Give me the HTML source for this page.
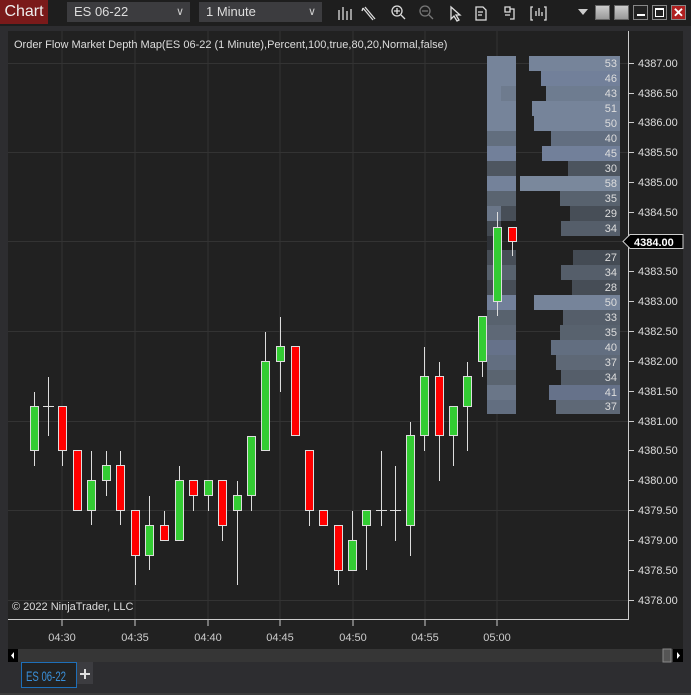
<!DOCTYPE html>
<html><head><meta charset="utf-8"><style>
*{margin:0;padding:0;box-sizing:border-box}
body{width:691px;height:695px;background:#2d2d30;font-family:"Liberation Sans",sans-serif;overflow:hidden;position:relative}
.top{position:absolute;left:0;top:0;width:691px;height:26px;background:#1e1e1e}
.chartlbl{position:absolute;left:0;top:0;width:48px;height:24px;background:#7a1a1a;color:#eee;font-size:16px;line-height:24px;text-align:center}
.dd{position:absolute;top:2px;height:20px;background:#3c3c3f;color:#ddd;font-size:13px;line-height:20px;padding-left:7px}
.dd span{position:absolute;right:6px;top:0;font-size:11px;color:#ccc}
.wb{position:absolute;top:5px;width:15px;height:15px;background:linear-gradient(#ccc,#999);border:1px solid #666}
text{font-family:"Liberation Sans",sans-serif}
</style></head><body>
<div class="top"></div>
<div class="chartlbl">Chart</div>
<div class="dd" style="left:67px;width:123px">ES 06-22<span>&#x2228;</span></div>
<div class="dd" style="left:199px;width:123px">1 Minute<span>&#x2228;</span></div>
<svg style="position:absolute;left:330px;top:2px" width="230" height="22" stroke="#ddd" fill="none" stroke-width="1.3">
<path d="M9 8v10M13 5v13M17 9v9M21 7v11"/>
<path d="M33 6l10 12M35 5l10 12M33 6l-1 3"/>
<circle cx="67" cy="9" r="5"/><path d="M71 13l4 4M64 9h6M67 6v6"/>
<g stroke="#777"><circle cx="95" cy="9" r="5"/><path d="M99 13l4 4M92 9h6"/></g>
<path d="M121 5v12l3-3 3 5 2-1-3-5h4z"/>
<path d="M146 5h7l3 3v10h-10zM148 10h5M148 13h4"/>
<path d="M175 5h5v5h-5zM175 13h5M180 7h4v10h-4"/>
<path d="M203 5h-2v13h2M214 5h2v13h-2M206 14v-5M209 14v-8M212 14v-4"/>
</svg>
<div style="position:absolute;left:578px;top:9px;width:0;height:0;border-left:5px solid transparent;border-right:5px solid transparent;border-top:6px solid #ccc"></div>
<div class="wb" style="left:595px"></div>
<div class="wb" style="left:614px"></div>
<div class="wb" style="left:633px;background:#222;border-color:#888"><div style="position:absolute;left:3px;top:8px;width:8px;height:2px;background:#fff"></div></div>
<div class="wb" style="left:652px;background:#222;border-color:#888"><div style="position:absolute;left:2px;top:2px;width:9px;height:9px;border:1px solid #fff;border-top-width:2px"></div></div>
<div class="wb" style="left:671px;background:#b02020;border-color:#888;color:#fff;font-size:13px;font-weight:bold;line-height:13px;text-align:center">✕</div>

<svg style="position:absolute;left:0;top:0" width="691" height="695">
<rect x="8" y="31" width="675" height="618" fill="#212121"/>
<g stroke="#333" stroke-width="1">
<path d="M62 31V619M135 31V619M208 31V619M280 31V619M353 31V619M425 31V619M497 31V619"/>
<path d="M8 63.5H628M8 152.5H628M8 241.5H628M8 331.5H628M8 421.5H628M8 510.5H628M8 600.5H628"/>
</g>
<g fill="none" stroke="#ccc"><path d="M628.5 31V619.5H8"/></g>
<g stroke="#ccc"><path d="M62 620v6M135 620v6M208 620v6M280 620v6M353 620v6M425 620v6M497 620v6"/></g>
<text x="14" y="48" fill="#ddd" font-size="11">Order Flow Market Depth Map(ES 06-22 (1 Minute),Percent,100,true,80,20,Normal,false)</text>
<text x="12" y="610" fill="#ddd" font-size="11">© 2022 NinjaTrader, LLC</text>
<g fill="#ccc" font-size="11" text-anchor="middle">
<text x="62" y="641">04:30</text><text x="135" y="641">04:35</text><text x="208" y="641">04:40</text><text x="280" y="641">04:45</text><text x="353" y="641">04:50</text><text x="425" y="641">04:55</text><text x="497" y="641">05:00</text>
</g>
<g>
<rect x="487" y="56" width="29" height="45" fill="#76849a"/>
<rect x="501" y="86" width="15" height="15" fill="#6e7b8e"/>
<rect x="487" y="101" width="29" height="30" fill="#76849a"/>
<rect x="487" y="131" width="29" height="15" fill="#626e7e"/>
<rect x="487" y="146" width="29" height="15" fill="#72809a"/>
<rect x="487" y="161" width="29" height="15" fill="#4e5660"/>
<rect x="487" y="176" width="29" height="15" fill="#74829a"/>
<rect x="487" y="191" width="29" height="15" fill="#5a6470"/>
<rect x="487" y="206" width="14" height="15" fill="#6a7688"/><rect x="501" y="206" width="15" height="15" fill="#474e57"/>
<rect x="487" y="221" width="14" height="15" fill="#434a52"/>
<rect x="487" y="236" width="14" height="14" fill="#2e3238"/>
<rect x="487" y="250" width="29" height="15" fill="#474e57"/>
<rect x="487" y="265" width="29" height="15" fill="#58626e"/>
<rect x="487" y="280" width="29" height="15" fill="#474e57"/>
<rect x="487" y="295" width="29" height="15" fill="#72809a"/>
<rect x="487" y="310" width="29" height="15" fill="#58626e"/>
<rect x="487" y="325" width="29" height="15" fill="#5e6876"/>
<rect x="487" y="340" width="29" height="15" fill="#66728a"/>
<rect x="487" y="355" width="29" height="15" fill="#626e80"/>
<rect x="487" y="370" width="29" height="15" fill="#5a6470"/>
<rect x="487" y="385" width="29" height="15" fill="#6a7688"/>
<rect x="487" y="400" width="29" height="14" fill="#626e80"/>
</g>
<g font-size="11" fill="#ddd" text-anchor="end">
<rect x="529" y="56" width="91" height="15" fill="#76849a"/><text x="617" y="67">53</text>
<rect x="541" y="71" width="79" height="15" fill="#72809a"/><text x="617" y="82">46</text>
<rect x="546" y="86" width="74" height="15" fill="#6e7c90"/><text x="617" y="97">43</text>
<rect x="532" y="101" width="88" height="15" fill="#76849a"/><text x="617" y="112">51</text>
<rect x="534" y="116" width="86" height="15" fill="#76849a"/><text x="617" y="127">50</text>
<rect x="551" y="131" width="69" height="15" fill="#626e80"/><text x="617" y="142">40</text>
<rect x="542" y="146" width="78" height="15" fill="#72809a"/><text x="617" y="157">45</text>
<rect x="568" y="161" width="52" height="15" fill="#4c545e"/><text x="617" y="172">30</text>
<rect x="520" y="176" width="100" height="15" fill="#7a889c"/><text x="617" y="187">58</text>
<rect x="560" y="191" width="60" height="15" fill="#58626e"/><text x="617" y="202">35</text>
<rect x="570" y="206" width="50" height="15" fill="#474e57"/><text x="617" y="217">29</text>
<rect x="561" y="221" width="59" height="15" fill="#555e6a"/><text x="617" y="232">34</text>
<rect x="573" y="250" width="47" height="15" fill="#444b54"/><text x="617" y="261">27</text>
<rect x="561" y="265" width="59" height="15" fill="#555e6a"/><text x="617" y="276">34</text>
<rect x="572" y="280" width="48" height="15" fill="#464d56"/><text x="617" y="291">28</text>
<rect x="534" y="295" width="86" height="15" fill="#76849a"/><text x="617" y="306">50</text>
<rect x="563" y="310" width="57" height="15" fill="#555e6a"/><text x="617" y="321">33</text>
<rect x="560" y="325" width="60" height="15" fill="#58626e"/><text x="617" y="336">35</text>
<rect x="551" y="340" width="69" height="15" fill="#626e80"/><text x="617" y="351">40</text>
<rect x="556" y="355" width="64" height="15" fill="#5e6876"/><text x="617" y="366">37</text>
<rect x="561" y="370" width="59" height="15" fill="#555e6a"/><text x="617" y="381">34</text>
<rect x="549" y="385" width="71" height="15" fill="#66728a"/><text x="617" y="396">41</text>
<rect x="556" y="400" width="64" height="14" fill="#5e6876"/><text x="617" y="410">37</text>
</g>
<g fill="#ddd" font-size="11">
<g stroke="#ccc"><path d="M629 63.5h5M629 93.5h5M629 122.5h5M629 152.5h5M629 182.5h5M629 212.5h5M629 271.5h5M629 301.5h5M629 331.5h5M629 361.5h5M629 391.5h5M629 421.5h5M629 450.5h5M629 480.5h5M629 510.5h5M629 540.5h5M629 570.5h5M629 600.5h5"/></g>
<text x="638" y="67">4387.00</text><text x="638" y="97">4386.50</text><text x="638" y="126">4386.00</text><text x="638" y="156">4385.50</text><text x="638" y="186">4385.00</text><text x="638" y="216">4384.50</text>
<text x="638" y="275">4383.50</text><text x="638" y="305">4383.00</text><text x="638" y="335">4382.50</text><text x="638" y="365">4382.00</text><text x="638" y="395">4381.50</text><text x="638" y="425">4381.00</text><text x="638" y="454">4380.50</text><text x="638" y="484">4380.00</text><text x="638" y="514">4379.50</text><text x="638" y="544">4379.00</text><text x="638" y="574">4378.50</text><text x="638" y="604">4378.00</text>
</g>
<path d="M623 241.5l7-7h53v14h-53z" fill="#000" stroke="#ccc"/>
<text x="634" y="246" fill="#fff" font-size="11" font-weight="bold">4384.00</text>
<g stroke="#ddd" stroke-width="1">
<path d="M34.5 392V466M48.5 377V436M43 406.5H54M62.5 406V466M91.5 451V525M106.5 451V496M120.5 451V525M135.5 510V585M149.5 496V570M164.5 511V540M179.5 466V540M193.5 480V511M208.5 480V511M222.5 480V541M237.5 481V585M251.5 436V511M265.5 332V450M280.5 317V392M309.5 450V526M338.5 525V585M352.5 511V570M366.5 510V570M381.5 451V526M376 510.5H387M395.5 466V541M390 510.5H401M410.5 422V556M424.5 347V451M439.5 362V481M453.5 406V466M467.5 362V451M482.5 316V377M497.5 212V316M512.5 227V256"/>
<g fill="#33cc33">
<rect x="30.5" y="406.5" width="8" height="44"/>
<rect x="87.5" y="480.5" width="8" height="30"/>
<rect x="102.5" y="465.5" width="8" height="15"/>
<rect x="145.5" y="525.5" width="8" height="30"/>
<rect x="175.5" y="480.5" width="8" height="60"/>
<rect x="204.5" y="480.5" width="8" height="15"/>
<rect x="233.5" y="495.5" width="8" height="15"/>
<rect x="247.5" y="436.5" width="8" height="59"/>
<rect x="261.5" y="361.5" width="8" height="89"/>
<rect x="276.5" y="346.5" width="8" height="15"/>
<rect x="348.5" y="540.5" width="8" height="30"/>
<rect x="362.5" y="510.5" width="8" height="15"/>
<rect x="406.5" y="435.5" width="8" height="90"/>
<rect x="420.5" y="376.5" width="8" height="59"/>
<rect x="449.5" y="406.5" width="8" height="29"/>
<rect x="463.5" y="376.5" width="8" height="30"/>
<rect x="478.5" y="316.5" width="8" height="45"/>
<rect x="493.5" y="227.5" width="8" height="74"/>
</g>
<g fill="#ff0000">
<rect x="58.5" y="406.5" width="8" height="44"/>
<rect x="73.5" y="450.5" width="8" height="60"/>
<rect x="116.5" y="465.5" width="8" height="45"/>
<rect x="131.5" y="510.5" width="8" height="45"/>
<rect x="160.5" y="525.5" width="8" height="15"/>
<rect x="189.5" y="480.5" width="8" height="15"/>
<rect x="218.5" y="480.5" width="8" height="45"/>
<rect x="291.5" y="346.5" width="8" height="89"/>
<rect x="305.5" y="450.5" width="8" height="60"/>
<rect x="319.5" y="510.5" width="8" height="15"/>
<rect x="334.5" y="525.5" width="8" height="45"/>
<rect x="435.5" y="376.5" width="8" height="59"/>
<rect x="508.5" y="227.5" width="8" height="14"/>
</g>
</g>
<rect x="8" y="649" width="675" height="13" fill="#363636"/>
<rect x="8" y="649" width="10" height="13" fill="#000"/><path d="M14 652v7l-3-3.5z" fill="#fff"/>
<rect x="673" y="649" width="10" height="13" fill="#000"/><path d="M677 652v7l3-3.5z" fill="#fff"/>
<rect x="663" y="649" width="8" height="13" fill="#555" stroke="#888"/>
<rect x="21.5" y="662.5" width="55" height="25" fill="#222" stroke="#1e6fb8"/>
<text x="26" y="681" fill="#3a8fd8" font-size="14" textLength="40" lengthAdjust="spacingAndGlyphs">ES 06-22</text>
<rect x="77" y="662" width="16" height="22" fill="#3c3c40"/>
<path d="M85 669v10M80 674h10" stroke="#ddd" stroke-width="2"/>
<rect x="0" y="693" width="691" height="2" fill="#3a3a3a"/>
</svg>
</body></html>
